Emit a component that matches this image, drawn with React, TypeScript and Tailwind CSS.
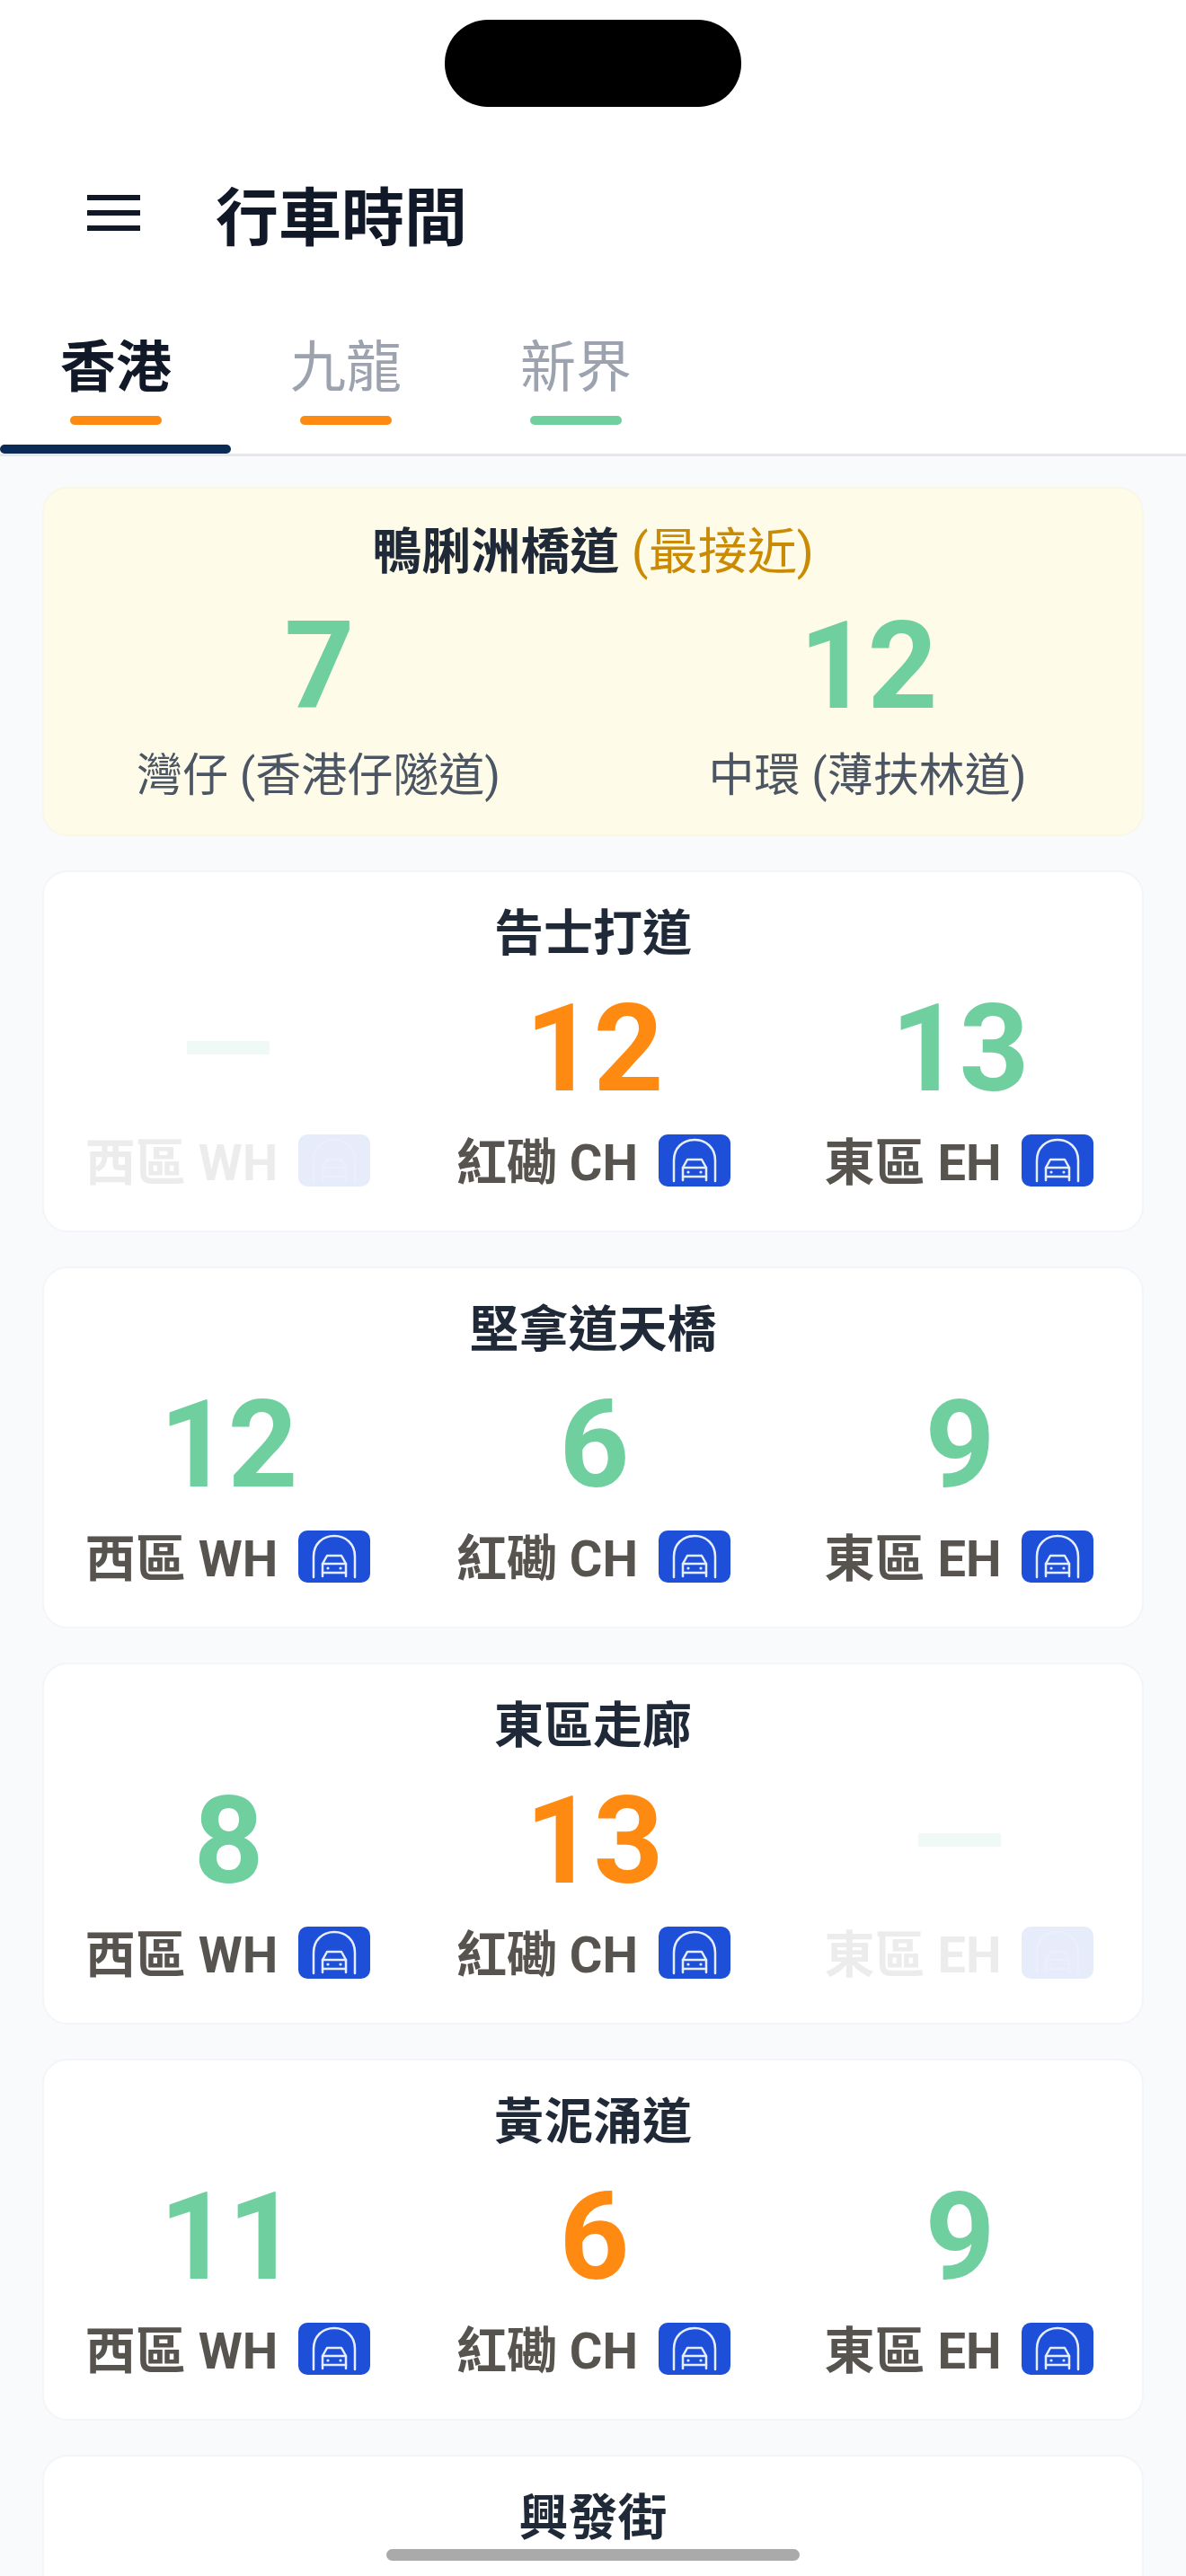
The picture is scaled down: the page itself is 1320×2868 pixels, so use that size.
const FONT = "font-['Roboto','Noto_Sans_CJK_TC','Noto_Sans_CJK_SC',sans-serif]";

type Tone = "green" | "orange" | "none";
type Cell = { value: string; tone: Tone };
type Road = { name: string; cells: [Cell, Cell, Cell] };

const g = (value: string): Cell => ({ value, tone: "green" });
const o = (value: string): Cell => ({ value, tone: "orange" });
const none: Cell = { value: "", tone: "none" };

const roads: Road[] = [
  { name: "告士打道", cells: [none, o("12"), g("13")] },
  { name: "堅拿道天橋", cells: [g("12"), g("6"), g("9")] },
  { name: "東區走廊", cells: [g("8"), o("13"), none] },
  { name: "黃泥涌道", cells: [g("11"), o("6"), g("9")] },
];

const labels = ["西區 WH", "紅磡 CH", "東區 EH"];

function TunnelIcon({ faint }: { faint?: boolean }) {
  return (
    <span className="flex h-[58px] w-[80px] shrink-0 items-center justify-center rounded-[10px] bg-[#1d4fd8]">
      <svg className={faint ? "opacity-20" : ""} width="80" height="58" viewBox="0 0 80 58" fill="none" stroke="#e6edff" strokeWidth="2.5" strokeLinejoin="round" strokeLinecap="round">
        <path d="M17 52V29C17 15 27 6 40 6S63 15 63 29V52" />
        <path d="M27 51V37L32 28H48L53 37V51" />
        <path d="M27 37H53M27 47H53" />
        <circle cx="33" cy="42" r="1" fill="#e6edff" strokeWidth="1.2" />
        <circle cx="47" cy="42" r="1" fill="#e6edff" strokeWidth="1.2" />
      </svg>
    </span>
  );
}

function Metric({ cell, label }: { cell: Cell; label: string }) {
  const off = cell.tone === "none";
  return (
    <div className="flex flex-col items-center">
      <div className={`flex h-[130px] items-center justify-center text-[136px] leading-[130px] font-bold tracking-[-2px] ${cell.tone === "orange" ? "text-[#ff8a11]" : "text-[#6fcf9f]"}`}>
        {off ? <span className="mt-[-4px] h-[15px] w-[92px] bg-[#eff9f5]" /> : cell.value}
      </div>
      <div className={`mt-[30px] flex h-[58px] items-center gap-[23px] ${off ? "opacity-10" : ""}`}>
        <span className="mt-[5px] text-[56px] leading-[58px] font-bold whitespace-nowrap text-[#57534e]">{label}</span>
        <TunnelIcon faint={off} />
      </div>
    </div>
  );
}

function Card({ road }: { road: Road }) {
  return (
    <section className="h-[403px] rounded-[28px] border-2 border-[#f4f5f8] bg-white pt-[33px]">
      <h2 className="text-center text-[55px] leading-[70px] font-bold text-[#1f2937]">{road.name}</h2>
      <div className="mt-[29px] grid grid-cols-3 pl-[1px]">
        {road.cells.map((c, i) => (
          <Metric key={labels[i]} cell={c} label={labels[i]} />
        ))}
      </div>
    </section>
  );
}

function Tab({ label, color, active }: { label: string; color: string; active?: boolean }) {
  return (
    <div className="relative flex h-[139px] w-[256px] flex-col items-center pl-[2px]">
      <span className={`mt-[2px] text-[62px] leading-[84px] ${active ? "font-bold text-[#111827]" : "text-[#9ca3af]"}`}>{label}</span>
      <span className={`mt-[11px] h-[10px] w-[102px] rounded-full ${color}`} />
      {active && <span className="absolute bottom-0 left-0 h-[10px] w-[257px] rounded-full bg-[#0b2a55]" />}
    </div>
  );
}

export default function App() {
  return (
    <div className={`relative h-[2868px] w-[1320px] overflow-hidden bg-[#f9fafb] ${FONT}`}>
      <header className="h-[508px] border-b-[3px] border-[#e5e7eb] bg-white">
        <div className="flex h-[366px] items-start">
          <div className="mt-[217px] ml-[97px] flex h-[40px] w-[59px] flex-col justify-between">
            <span className="h-[6px] bg-[#111827]" />
            <span className="h-[6px] bg-[#111827]" />
            <span className="h-[6px] bg-[#111827]" />
          </div>
          <h1 className="mt-[194px] ml-[84px] text-[70px] leading-[100px] font-bold text-[#111827]">行車時間</h1>
        </div>
        <nav className="flex">
          <Tab label="香港" color="bg-[#ff8a11]" active />
          <Tab label="九龍" color="bg-[#ff8a11]" />
          <Tab label="新界" color="bg-[#6fcf9f]" />
        </nav>
      </header>

      <main className="flex flex-col gap-[38px] px-[47px] pt-[34px]">
        <section className="h-[389px] rounded-[28px] border-2 border-[#f8f7e9] bg-[#fefce8] pt-[34px]">
          <h2 className="text-center text-[55px] leading-[72px] font-bold text-[#1f2937]">
            鴨脷洲橋道 <span className="font-normal text-[#ca8a04]">(最接近)</span>
          </h2>
          <div className="mt-[27px] grid grid-cols-2">
            <div className="flex flex-col items-center">
              <span className="text-[136px] leading-[130px] font-bold tracking-[-2px] text-[#6fcf9f]">7</span>
              <span className="mt-[21px] text-[51px] leading-[72px] text-[#4b5563]">灣仔 (香港仔隧道)</span>
            </div>
            <div className="flex flex-col items-center">
              <span className="text-[136px] leading-[130px] font-bold tracking-[-2px] text-[#6fcf9f]">12</span>
              <span className="mt-[21px] text-[51px] leading-[72px] text-[#4b5563]">中環 (薄扶林道)</span>
            </div>
          </div>
        </section>
        {roads.map((r) => (
          <Card key={r.name} road={r} />
        ))}
        <section className="h-[403px] rounded-[28px] border-2 border-[#f4f5f8] bg-white pt-[33px]">
          <h2 className="text-center text-[55px] leading-[70px] font-bold text-[#1f2937]">興發街</h2>
        </section>
      </main>

      <div className="absolute top-[22px] left-[495px] h-[97px] w-[330px] rounded-[48px] bg-black" />
      <div className="absolute top-[2838px] left-[430px] h-[13px] w-[460px] rounded-full bg-[#aaaaaa]" />
    </div>
  );
}
